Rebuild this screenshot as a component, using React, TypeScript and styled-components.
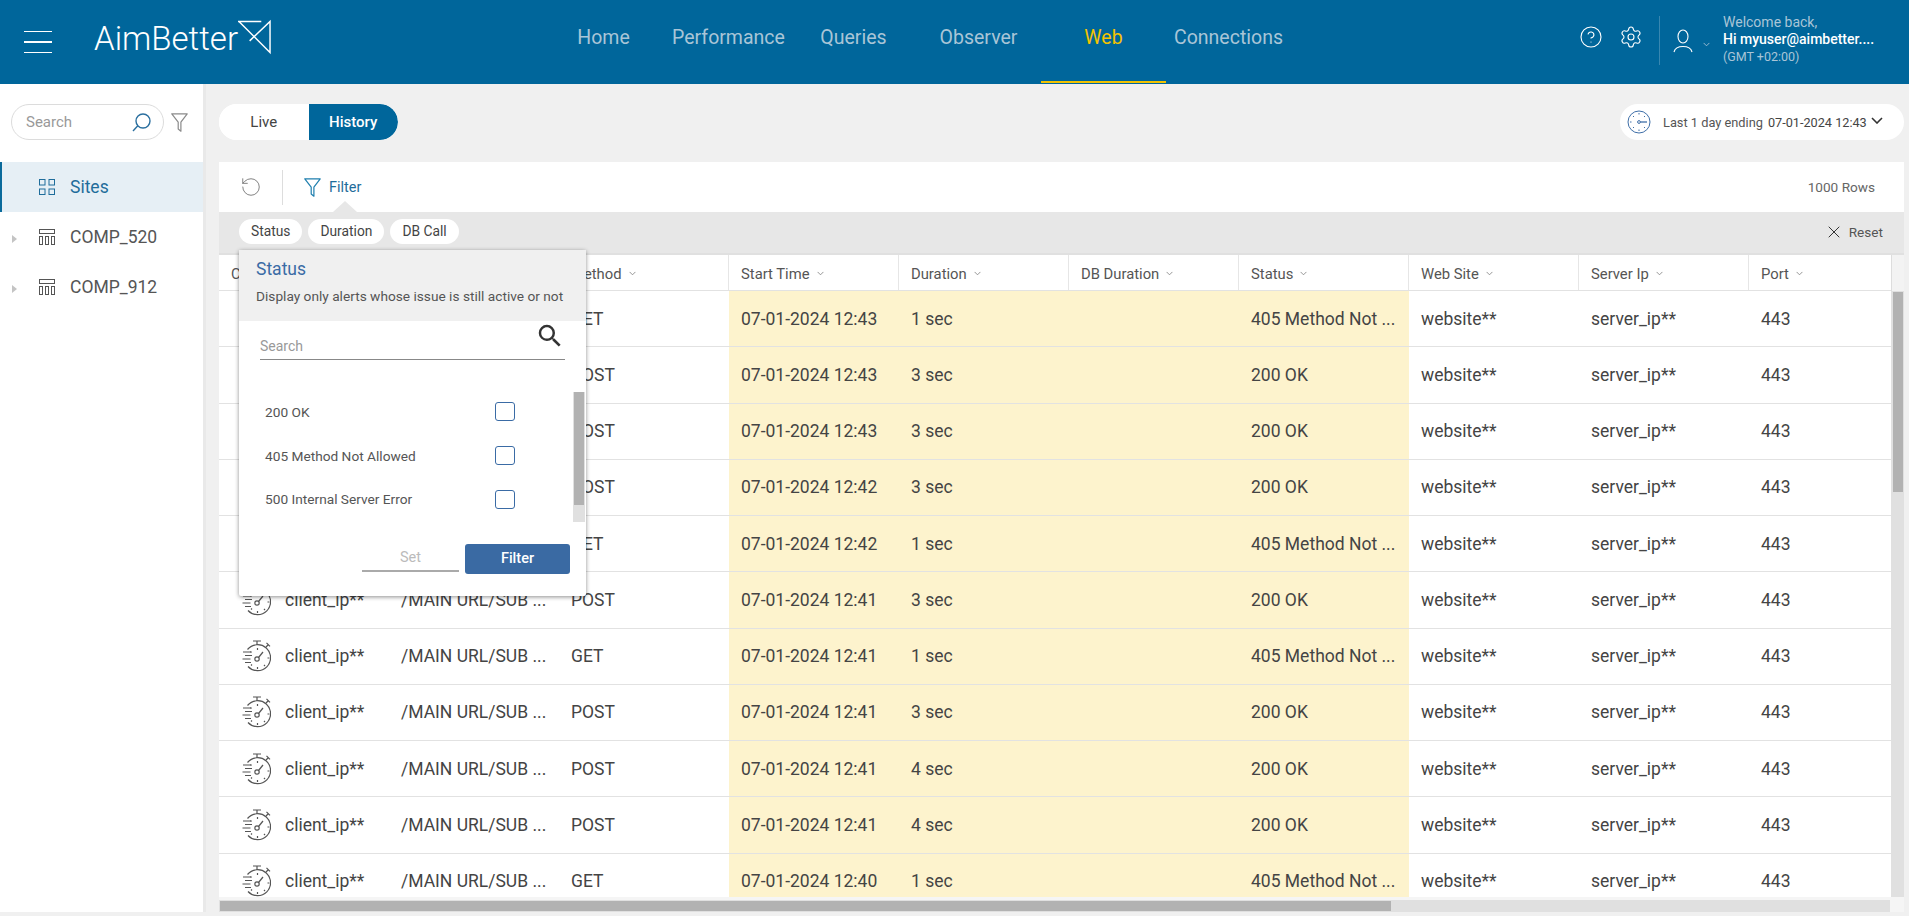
import React from "react";
import styled, { createGlobalStyle } from "styled-components";
import { CircleHelp, Settings, RotateCcw, X } from "lucide-react";

const GlobalStyle = createGlobalStyle`
  html, body { margin: 0; padding: 0; height: 916px; overflow: hidden; background: #f0f0f0; }
  body { font-family: Roboto, "Liberation Sans", sans-serif; color: #444; }
  * { box-sizing: border-box; }
`;

const Page = styled.div`
  width: 1909px;
  height: 916px;
  display: flex;
  flex-direction: column;
  overflow: hidden;
`;

/* ---------- top header ---------- */
const Header = styled.header`
  height: 84px;
  flex: none;
  display: flex;
  align-items: center;
  background: #00669b;
`;
const Brand = styled.div`
  width: 541px;
  flex: none;
  display: flex;
  align-items: center;
  padding-left: 24px;
`;
const MenuButton = styled.div`
  width: 28px;
  display: flex;
  flex-direction: column;
  gap: 9px;
  span { display: block; height: 1.5px; background: #fff; }
`;
const LogoText = styled.div`
  margin-left: 42px;
  font-size: 33px;
  font-weight: 300;
  line-height: 40px;
  color: #fff;
  margin-top: -6px;
`;
const LogoMark = styled.svg`
  width: 33px;
  height: 36px;
  margin-top: -11px;
  flex: none;
`;
const Nav = styled.nav`
  display: flex;
  height: 84px;
`;
const NavTab = styled.div<{ $active?: boolean }>`
  width: 125px;
  height: 83px;
  text-align: center;
  line-height: 75px;
  font-size: 19.5px;
  color: ${(p) => (p.$active ? "#f2c200" : "#a9c5d7")};
  border-bottom: 2px solid ${(p) => (p.$active ? "#f2c200" : "transparent")};
`;
const HeaderRight = styled.div`
  margin-left: 288px;
  display: flex;
  align-items: center;
  color: #fff;
`;
const HeaderIcons = styled.div`
  display: flex;
  align-items: center;
  gap: 16px;
  margin-top: -10px;
`;
const HeaderDivider = styled.div`
  width: 1px;
  height: 49px;
  background: rgba(255, 255, 255, 0.22);
  margin: -4px 13px 0 16px;
`;
const UserIcon = styled.svg`
  width: 20px;
  height: 24px;
  flex: none;
  margin-top: -2px;
`;
const SmallChevron = styled.svg`
  width: 7px;
  height: 5px;
  flex: none;
`;
const UserChevron = styled(SmallChevron)`
  margin: 4px 13px 0 10px;
`;
const UserText = styled.div`
  display: flex;
  flex-direction: column;
  margin-top: -6px;
`;
const Welcome = styled.div`
  font-size: 14px;
  line-height: 17px;
  color: #a9c5d7;
`;
const UserName = styled.div`
  font-size: 14px;
  line-height: 17px;
  font-weight: 500;
  color: #fff;
`;
const Zone = styled.div`
  font-size: 12.5px;
  line-height: 17px;
  color: #a9c5d7;
`;

/* ---------- body ---------- */
const Main = styled.div`
  flex: 1;
  display: flex;
  min-height: 0;
`;
const Sidebar = styled.aside`
  width: 206px;
  height: 828px;
  flex: none;
  background: #fff;
  border-right: 3px solid #e9e9e9;
  padding-top: 20px;
`;
const SideSearchRow = styled.div`
  display: flex;
  align-items: center;
  height: 36px;
  margin-bottom: 22px;
  padding-left: 11px;
  gap: 7px;
`;
const SearchPill = styled.div`
  width: 153px;
  height: 36px;
  border: 1px solid #dcdcdc;
  border-radius: 18px;
  display: flex;
  align-items: center;
  justify-content: space-between;
  padding: 0 12px 0 14px;
  font-size: 15px;
  color: #999;
`;
const SideItem = styled.div<{ $active?: boolean }>`
  height: 50px;
  display: flex;
  align-items: center;
  font-size: 17.5px;
  padding-left: ${(p) => (p.$active ? "37px" : "12px")};
  color: ${(p) => (p.$active ? "#1f6d9b" : "#555")};
  background: ${(p) => (p.$active ? "#e6eff5" : "#fff")};
  border-left: ${(p) => (p.$active ? "2px solid #0a6a9b" : "0")};
`;
const Caret = styled.span`
  width: 0;
  height: 0;
  border-left: 5px solid #c4c4c4;
  border-top: 4px solid transparent;
  border-bottom: 4px solid transparent;
  margin: 3px 22px 0 0;
`;
const SideIcon = styled.svg`
  width: 16px;
  height: 16px;
  margin-right: 15px;
  flex: none;
`;

const Content = styled.main`
  position: relative;
  width: 1703px;
  padding: 20px 0 0 13px;
  display: flex;
  flex-direction: column;
`;
const TopRow = styled.div`
  display: flex;
  align-items: center;
  justify-content: space-between;
  height: 36px;
  width: 1685px;
  margin-bottom: 22px;
`;
const Toggle = styled.div`
  display: flex;
  width: 179px;
  height: 36px;
  border-radius: 18px;
  background: #fff;
  overflow: hidden;
`;
const ToggleOption = styled.div<{ $active?: boolean }>`
  flex: 1;
  display: flex;
  align-items: center;
  justify-content: center;
  font-size: 15px;
  font-weight: ${(p) => (p.$active ? 500 : 400)};
  color: ${(p) => (p.$active ? "#fff" : "#444")};
  background: ${(p) => (p.$active ? "#00669b" : "#fff")};
  border-radius: ${(p) => (p.$active ? "0 18px 18px 0" : "0")};
`;
const DatePill = styled.div`
  width: 284px;
  height: 36px;
  border-radius: 18px;
  background: #fff;
  display: flex;
  align-items: center;
  padding-left: 7px;
  font-size: 12.8px;
  color: #555;
`;
const ClockIcon = styled.svg`
  width: 24px;
  height: 24px;
  flex: none;
  margin-right: 12px;
`;
const DateValue = styled.span`
  margin-left: 5px;
  font-size: 12.7px;
  color: #444;
`;
const DateChevron = styled.svg`
  width: 12px;
  height: 7px;
  margin-left: 4px;
  margin-top: -4px;
`;

const Toolbar = styled.div`
  width: 1685px;
  height: 50px;
  flex: none;
  background: #fff;
  display: flex;
  align-items: center;
  padding-left: 21px;
`;
const ToolDivider = styled.div`
  width: 1px;
  height: 35px;
  background: #ddd;
  margin: 0 21px 0 20px;
`;
const FunnelIcon = styled.svg`
  width: 17px;
  height: 19px;
  flex: none;
`;
const ToolLabel = styled.span`
  margin-left: 8px;
  font-size: 14.5px;
  color: #1f6d9b;
`;
const RowCount = styled.span`
  margin-left: auto;
  padding-right: 29px;
  font-size: 13.6px;
  color: #666;
`;
const FilterBar = styled.div`
  position: relative;
  width: 1685px;
  height: 43px;
  flex: none;
  background: #e7e7e7;
  border-bottom: 2px solid #e0e0e0;
  display: flex;
  align-items: flex-start;
  padding: 7px 21px 0 20px;
  gap: 6px;
  &::before {
    content: "";
    position: absolute;
    left: 114px;
    top: -11px;
    border-left: 12px solid transparent;
    border-right: 12px solid transparent;
    border-bottom: 11px solid #e7e7e7;
  }
`;
const Chip = styled.div`
  height: 25px;
  padding: 0 12px;
  border-radius: 13px;
  background: #fff;
  font-size: 13.8px;
  line-height: 25px;
  color: #444;
`;
const ResetButton = styled.div`
  margin-left: auto;
  margin-top: 3px;
  display: flex;
  align-items: center;
  gap: 5px;
  font-size: 13.6px;
  color: #555;
`;

/* ---------- table ---------- */
const TableFrame = styled.div`
  display: flex;
  width: 1685px;
  height: 642px;
  flex: none;
`;
const Table = styled.div`
  width: 1672px;
  height: 642px;
  background: #fff;
  overflow: hidden;
  flex: none;
`;
const columns = "repeat(9, 170px) 142px";
const HeaderRow = styled.div`
  display: grid;
  grid-template-columns: ${columns};
  height: 36px;
  border-bottom: 1px solid #e2e2e2;
`;
const HeaderCell = styled.div`
  display: flex;
  align-items: center;
  gap: 7px;
  padding: 2px 0 0 12px;
  font-size: 14.8px;
  color: #555;
  border-right: 1px solid #e6e6e6;
  &:last-child { border-right: 0; }
`;
const Row = styled.div`
  display: grid;
  grid-template-columns: ${columns};
  height: 56.25px;
  border-bottom: 1px solid #e2e2e2;
`;
const Cell = styled.div<{ $warn?: boolean }>`
  display: flex;
  align-items: center;
  padding-left: 12px;
  font-size: 17.5px;
  color: #444;
  white-space: nowrap;
  overflow: hidden;
  background: ${(p) => (p.$warn ? "#fdf3cd" : "transparent")};
`;
const ClientCell = styled(Cell)`
  padding-left: 23px;
  gap: 14px;
`;
const Stopwatch = styled.svg`
  width: 29px;
  height: 32px;
  flex: none;
`;
const VScrollTrack = styled.div`
  width: 13px;
  height: 642px;
  flex: none;
  display: flex;
  flex-direction: column;
  background: #e0e0e0;
`;
const VScrollHead = styled.div`
  height: 36px;
  flex: none;
  background: #f3f3f3;
  border-left: 1px solid #ddd;
`;
const VScrollThumb = styled.div`
  width: 10px;
  height: 200px;
  margin: 1px 0 0 2px;
  background: #b2b2b2;
`;
const HScrollZone = styled.div`
  width: 1685px;
  height: 15px;
  flex: none;
  padding-top: 3px;
  background: #f5f5f5;
`;
const HScrollTrack = styled.div`
  width: 1671px;
  height: 12px;
  background: #e0e0e0;
  padding: 1px;
`;
const HScrollThumb = styled.div`
  width: 1171px;
  height: 10px;
  background: #b2b2b2;
`;

/* ---------- status popover ---------- */
const Popover = styled.div`
  position: absolute;
  left: 33px;
  top: 166px;
  width: 347px;
  height: 346px;
  display: flex;
  flex-direction: column;
  background: #fff;
  border-radius: 2px;
  box-shadow: 0 1px 4px rgba(0, 0, 0, 0.45);
`;
const PopHeader = styled.div`
  height: 71px;
  flex: none;
  padding: 8px 17px 0;
  background: #f0f0f0;
`;
const PopTitle = styled.div`
  font-size: 17.5px;
  line-height: 22px;
  color: #3a6ba5;
`;
const PopDescription = styled.div`
  margin-top: 7px;
  font-size: 13.7px;
  line-height: 18px;
  color: #555;
  white-space: nowrap;
`;
const PopSearch = styled.div`
  height: 39px;
  flex: none;
  margin: 0 21px;
  display: flex;
  align-items: flex-end;
  justify-content: space-between;
  border-bottom: 1px solid #888;
  font-size: 14px;
  color: #999;
  padding-bottom: 5px;
`;
const PopSearchIcon = styled.svg`
  width: 30px;
  height: 30px;
  margin: 0 0 3px 0;
  flex: none;
  fill: #333;
`;
const PopList = styled.div`
  height: 130px;
  flex: none;
  margin-top: 32px;
  display: flex;
  justify-content: space-between;
`;
const PopItems = styled.div`
  padding-left: 26px;
  margin-top: -2px;
`;
const PopItem = styled.div`
  width: 250px;
  height: 43.8px;
  display: flex;
  align-items: center;
  justify-content: space-between;
  font-size: 13.7px;
  color: #555;
`;
const CheckBox = styled.span`
  width: 20px;
  height: 19px;
  border: 1px solid #3a6ba5;
  border-radius: 3px;
`;
const PopScrollTrack = styled.div`
  width: 12px;
  height: 130px;
  margin-right: 1px;
  background: #e0e0e0;
`;
const PopScrollThumb = styled.div`
  width: 10px;
  height: 113px;
  margin-left: 1px;
  background: #b2b2b2;
`;
const PopFooter = styled.div`
  display: flex;
  justify-content: flex-end;
  gap: 6px;
  margin-top: 22px;
  padding-right: 16px;
`;
const SetButton = styled.div`
  width: 97px;
  height: 28px;
  text-align: center;
  line-height: 28px;
  font-size: 14.5px;
  color: #bbb;
  border-bottom: 2px solid #aaa;
`;
const FilterButton = styled.div`
  width: 105px;
  height: 30px;
  text-align: center;
  line-height: 30px;
  font-size: 14.5px;
  font-weight: 500;
  color: #fff;
  background: #3a6aa3;
  border-radius: 3px;
`;

/* ---------- icons ---------- */
const Chevron = ({ color = "#888" }: { color?: string }) => (
  <SmallChevron viewBox="0 0 8 5" fill="none" stroke={color} strokeWidth="1">
    <path d="M.7.7 4 4l3.3-3.3" />
  </SmallChevron>
);
const Funnel = ({ color }: { color: string }) => (
  <FunnelIcon viewBox="0 0 17 19" fill="none" stroke={color} strokeWidth="1.2">
    <path d="M.8.8h15.4L9.9 9.2v9L7.2 16V9.2z" strokeLinejoin="round" />
  </FunnelIcon>
);
const PillSearch = () => (
  <svg width="19" height="19" viewBox="0 0 19 19" fill="none" stroke="#2a6f9f" strokeWidth="1.4">
    <circle cx="11" cy="8" r="7" />
    <path d="M5.8 12.8 1 18" />
  </svg>
);
const GridGlyph = () => (
  <SideIcon viewBox="0 0 16 16" fill="none" stroke="#1f6d9b" strokeWidth="1">
    <rect x=".5" y=".5" width="5.5" height="5.5" />
    <rect x="10" y=".5" width="5.5" height="5.5" />
    <rect x=".5" y="10" width="5.5" height="5.5" />
    <rect x="10" y="10" width="5.5" height="5.5" />
  </SideIcon>
);
const TableGlyph = () => (
  <SideIcon viewBox="0 0 16 16" fill="none" stroke="#555" strokeWidth="1">
    <rect x=".5" y=".5" width="15" height="4" />
    <rect x=".5" y="7.5" width="3" height="8" />
    <rect x="6.5" y="7.5" width="3" height="8" />
    <rect x="12.5" y="7.5" width="3" height="8" />
  </SideIcon>
);
const StopwatchGlyph = () => (
  <Stopwatch viewBox="0 0 29 32" fill="none" stroke="#555" strokeWidth="1.2">
    <path d="M11 1h8M15 1v4" />
    <path d="M5.5 9.5A13 13 0 1 1 6 26.500" />
    <path d="M24 7l2.500-2.500M24.500 2.800l3.500 3.500" />
    <path d="M1 12h8M3 15.500h7M0.500 19h8M3 22.500h6" />
    <circle cx="15" cy="19" r="2.200" />
    <path d="M16.500 17.500 21 12" />
    <path d="M15.500 8v2M25.500 18h2M15.500 27v2M8.500 11.500l1 1M22 25l1 1M9 25.500l1-1" />
  </Stopwatch>
);

type RowData = { method: string; time: string; dur: number; ok: boolean };
const rows: RowData[] = [
  { method: "GET", time: "12:43", dur: 1, ok: false },
  { method: "POST", time: "12:43", dur: 3, ok: true },
  { method: "POST", time: "12:43", dur: 3, ok: true },
  { method: "POST", time: "12:42", dur: 3, ok: true },
  { method: "GET", time: "12:42", dur: 1, ok: false },
  { method: "POST", time: "12:41", dur: 3, ok: true },
  { method: "GET", time: "12:41", dur: 1, ok: false },
  { method: "POST", time: "12:41", dur: 3, ok: true },
  { method: "POST", time: "12:41", dur: 4, ok: true },
  { method: "POST", time: "12:41", dur: 4, ok: true },
  { method: "GET", time: "12:40", dur: 1, ok: false },
];
const headers = ["Client Ip", "Url", "Method", "Start Time", "Duration", "DB Duration", "Status", "Web Site", "Server Ip", "Port"];
const navItems = ["Home", "Performance", "Queries", "Observer", "Web", "Connections"];

export default function App() {
  return (
    <Page>
      <GlobalStyle />
      <Header>
        <Brand>
          <MenuButton><span /><span /><span /></MenuButton>
          <LogoText>AimBetter</LogoText>
          <LogoMark viewBox="0 0 34 36" fill="none" stroke="#fff" strokeWidth="1.5">
            <path d="M0 2h24M1 2l32 32V2L12 22" />
          </LogoMark>
        </Brand>
        <Nav>
          {navItems.map((n) => <NavTab key={n} $active={n === "Web"}>{n}</NavTab>)}
        </Nav>
        <HeaderRight>
          <HeaderIcons>
            <CircleHelp size={24} strokeWidth={1.1} />
            <Settings size={24} strokeWidth={1.1} />
          </HeaderIcons>
          <HeaderDivider />
          <UserIcon viewBox="0 0 20 24" fill="none" stroke="#fff" strokeWidth="1.1">
            <ellipse cx="10" cy="7.500" rx="5" ry="6.500" />
            <path d="M1 23c1-4 5-5.500 9-5.500s8 1.500 9 5.500" />
          </UserIcon>
          <UserChevron viewBox="0 0 8 5" fill="none" stroke="#a9c5d7" strokeWidth="1">
            <path d="M.7.7 4 4l3.300-3.300" />
          </UserChevron>
          <UserText>
            <Welcome>Welcome back,</Welcome>
            <UserName>Hi myuser@aimbetter....</UserName>
            <Zone>(GMT +02:00)</Zone>
          </UserText>
        </HeaderRight>
      </Header>
      <Main>
        <Sidebar>
          <SideSearchRow>
            <SearchPill>Search<PillSearch /></SearchPill>
            <Funnel color="#8a8a8a" />
          </SideSearchRow>
          <SideItem $active><GridGlyph />Sites</SideItem>
          <SideItem><Caret /><TableGlyph />COMP_520</SideItem>
          <SideItem><Caret /><TableGlyph />COMP_912</SideItem>
        </Sidebar>
        <Content>
          <TopRow>
            <Toggle>
              <ToggleOption>Live</ToggleOption>
              <ToggleOption $active>History</ToggleOption>
            </Toggle>
            <DatePill>
              <ClockIcon viewBox="0 0 24 24" fill="none" stroke="#3f6fa8" strokeWidth="1">
                <circle cx="12" cy="12" r="11" />
                <path d="M12 3v1.500M12 19.500V21M3 12h1.500M6 6l1 1M18 18l-1-1M6 18l1-1M18 6l-1 1" />
                <circle cx="12" cy="12" r="1.400" />
                <path d="M13.400 12H20" strokeWidth="1.300" />
              </ClockIcon>
              Last 1 day ending
              <DateValue>07-01-2024 12:43</DateValue>
              <DateChevron viewBox="0 0 12 7" fill="none" stroke="#333" strokeWidth="1.600">
                <path d="M1 1l5 5 5-5" />
              </DateChevron>
            </DatePill>
          </TopRow>
          <Toolbar>
            <RotateCcw size={22} strokeWidth={1} color="#777" />
            <ToolDivider />
            <Funnel color="#1f7fae" />
            <ToolLabel>Filter</ToolLabel>
            <RowCount>1000 Rows</RowCount>
          </Toolbar>
          <FilterBar>
            <Chip>Status</Chip>
            <Chip>Duration</Chip>
            <Chip>DB Call</Chip>
            <ResetButton><X size={20} strokeWidth={1.2} color="#333" />Reset</ResetButton>
          </FilterBar>
          <TableFrame>
            <Table>
              <HeaderRow>
                {headers.map((h) => <HeaderCell key={h}>{h}<Chevron /></HeaderCell>)}
              </HeaderRow>
              {rows.map((r, i) => (
                <Row key={i}>
                  <ClientCell><StopwatchGlyph />client_ip**</ClientCell>
                  <Cell>/MAIN URL/SUB ...</Cell>
                  <Cell>{r.method}</Cell>
                  <Cell $warn>07-01-2024 {r.time}</Cell>
                  <Cell $warn>{r.dur} sec</Cell>
                  <Cell $warn />
                  <Cell $warn>{r.ok ? "200 OK" : "405 Method Not ..."}</Cell>
                  <Cell>website**</Cell>
                  <Cell>server_ip**</Cell>
                  <Cell>443</Cell>
                </Row>
              ))}
            </Table>
            <VScrollTrack>
              <VScrollHead />
              <VScrollThumb />
            </VScrollTrack>
          </TableFrame>
          <HScrollZone>
            <HScrollTrack><HScrollThumb /></HScrollTrack>
          </HScrollZone>
          <Popover>
            <PopHeader>
              <PopTitle>Status</PopTitle>
              <PopDescription>Display only alerts whose issue is still active or not</PopDescription>
            </PopHeader>
            <PopSearch>
              Search
              <PopSearchIcon viewBox="0 0 24 24">
                <path d="M15.500 14h-.79l-.28-.27A6.471 6.471 0 0 0 16 9.500 6.500 6.500 0 1 0 9.500 16c1.610 0 3.090-.59 4.230-1.570l.27.28v.79l5 4.990L20.490 19l-4.990-5zm-6 0C7.010 14 5 11.990 5 9.500S7.010 5 9.500 5 14 7.010 14 9.500 11.990 14 9.500 14z" />
              </PopSearchIcon>
            </PopSearch>
            <PopList>
              <PopItems>
                <PopItem>200 OK<CheckBox /></PopItem>
                <PopItem>405 Method Not Allowed<CheckBox /></PopItem>
                <PopItem>500 Internal Server Error<CheckBox /></PopItem>
              </PopItems>
              <PopScrollTrack><PopScrollThumb /></PopScrollTrack>
            </PopList>
            <PopFooter>
              <SetButton>Set</SetButton>
              <FilterButton>Filter</FilterButton>
            </PopFooter>
          </Popover>
        </Content>
      </Main>
    </Page>
  );
}
